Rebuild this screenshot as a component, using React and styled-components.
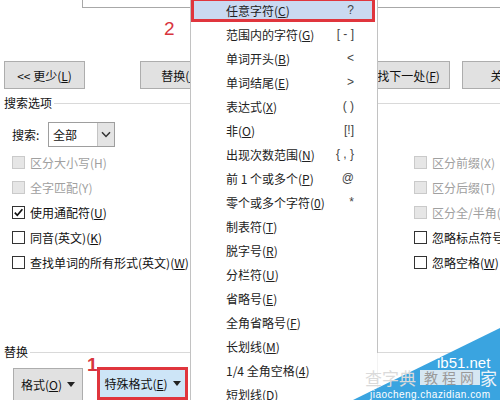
import React from "react";
import styled, { createGlobalStyle } from "styled-components";

const GlobalStyle = createGlobalStyle`
  html, body {
    margin: 0;
    padding: 0;
    background: #fff;
  }
  body {
    width: 500px;
    height: 400px;
    overflow: hidden;
    font-family: "Noto Sans CJK SC", "Liberation Sans", sans-serif;
    font-size: 12px;
    color: #1a1a1a;
  }
`;

const leftOptions = [
  { label: "区分大小写", key: "H", disabled: true },
  { label: "全字匹配", key: "Y", disabled: true },
  { label: "使用通配符", key: "U", checked: true },
  { label: "同音(英文)", key: "K" },
  { label: "查找单词的所有形式(英文)", key: "W" },
];

const rightOptions = [
  { label: "区分前缀", key: "X", disabled: true },
  { label: "区分后缀", key: "T", disabled: true },
  { label: "区分全/半角", key: "M", disabled: true },
  { label: "忽略标点符号", key: "S" },
  { label: "忽略空格", key: "W" },
];

const menuItems = [
  { label: "任意字符", key: "C", hint: "?", selected: true },
  { label: "范围内的字符", key: "G", hint: "[ - ]" },
  { label: "单词开头", key: "B", hint: "<" },
  { label: "单词结尾", key: "E", hint: ">" },
  { label: "表达式", key: "X", hint: "( )" },
  { label: "非", key: "O", hint: "[!]" },
  { label: "出现次数范围", key: "N", hint: "{ , }" },
  { label: "前 1 个或多个", key: "P", hint: "@" },
  { label: "零个或多个字符", key: "0", hint: "*" },
  { label: "制表符", key: "T" },
  { label: "脱字号", key: "R" },
  { label: "分栏符", key: "U" },
  { label: "省略号", key: "E" },
  { label: "全角省略号", key: "F" },
  { label: "长划线", key: "M" },
  { label: "1/4 全角空格", key: "4" },
  { label: "短划线", key: "D" },
];

function Caret() {
  return (
    <svg width="8" height="5" viewBox="0 0 8 5">
      <polygon points="0,0 8,0 4,5" fill="#222" />
    </svg>
  );
}

function CheckOption({ label, shortcut, disabled, checked }) {
  return (
    <Option $disabled={disabled}>
      <Box $disabled={disabled}>
        {checked && (
          <svg width="11" height="11" viewBox="0 0 11 11">
            <path d="M1.8 5.6 L4.3 8.3 L9.4 2.2" fill="none" stroke="#111" strokeWidth="1.7" />
          </svg>
        )}
      </Box>
      <span>
        {label}({disabled ? shortcut : <u>{shortcut}</u>})
      </span>
    </Option>
  );
}

function App() {
  return (
    <Dialog>
      <GlobalStyle />
      <TopField />

      <ButtonRow>
        <Button $w={81} $mr={43}><span>&lt;&lt; 更少(<u>L</u>)</span></Button>
        <Button $w={82}><span>替换(<u>R</u>)</span></Button>
        <Button $w={109}><span>全部替换(<u>A</u>)</span></Button>
        <Button $w={95}><span>查找下一处(<u>F</u>)</span></Button>
        <Button $w={81}><span>关闭</span></Button>
      </ButtonRow>

      <SectionHead $top={7}>
        <span>搜索选项</span>
        <Rule />
      </SectionHead>

      <SearchRow>
        <FieldLabel>搜索:</FieldLabel>
        <Select>
          <SelectText>全部</SelectText>
          <SelectButton>
            <svg width="10" height="7" viewBox="0 0 10 7">
              <path d="M1 1.2 L5 5.4 L9 1.2" fill="none" stroke="#333" strokeWidth="1.5" />
            </svg>
          </SelectButton>
        </Select>
      </SearchRow>

      <OptionGrid>
        {leftOptions.map((o, i) => (
          <CheckOption key={"l" + i} label={o.label} shortcut={o.key} disabled={o.disabled} checked={o.checked} />
        ))}
        {rightOptions.map((o, i) => (
          <CheckOption key={"r" + i} label={o.label} shortcut={o.key} disabled={o.disabled} checked={o.checked} />
        ))}
      </OptionGrid>

      <SectionHead $top={70}>
        <span>替换</span>
        <Rule />
      </SectionHead>

      <BottomRow>
        <DropButton $w={70}>
          <span>格式(<u>O</u>)</span>
          <Caret />
        </DropButton>
        <DropButton $w={91} $active>
          <span>特殊格式(<u>E</u>)</span>
          <Caret />
        </DropButton>
      </BottomRow>

      <Menu>
        {menuItems.map((m, i) => (
          <MenuItem key={i} $selected={m.selected}>
            <span>
              {m.label}(<u>{m.key}</u>)
            </span>
            {m.hint && <Hint>{m.hint}</Hint>}
          </MenuItem>
        ))}
      </Menu>

      <Mark $x={164} $y={18}>2</Mark>
      <Mark $x={87} $y={354} $bold>1</Mark>

      <Watermark>
        <svg width="147" height="72" viewBox="0 0 147 72">
          <rect x="0" y="25" width="147" height="47" fill="#fff" opacity="0.8" />
          <polygon points="0,72 147,0 147,72" fill="#3aa4e0" />
          <text x="84" y="40" fill="#fff" fontSize="15" fontFamily="Liberation Sans, sans-serif">ib51.net</text>
          <text x="12" y="57" fill="#dadada" fontSize="17" fontFamily="Noto Sans CJK SC, sans-serif">查字典</text>
          <rect x="67" y="42" width="60" height="15" fill="#e8eef4" opacity="0.9" />
          <text x="71" y="55" fill="#9a9a9a" fontSize="14" fontFamily="Noto Sans CJK SC, sans-serif" letterSpacing="4">教程网</text>
          <text x="127" y="57" fill="#eef4f8" fontSize="17" fontFamily="Noto Sans CJK SC, sans-serif">家</text>
          <text x="17" y="70" fill="#fff" fontSize="10" fontFamily="Liberation Sans, sans-serif" textLength="120">jiaocheng.chazidian.com</text>
        </svg>
      </Watermark>
    </Dialog>
  );
}

export default App;

const Dialog = styled.div`
  position: relative;
  width: 500px;
  height: 400px;
  overflow: hidden;
  background: #fff;
`;

const TopField = styled.div`
  margin-left: 82px;
  height: 7px;
  border: 1px solid #a8a8a8;
  border-top: none;
  border-right: none;
`;

const ButtonRow = styled.div`
  display: flex;
  gap: 12px;
  margin-top: 53px;
  padding-left: 4px;
  height: 28px;
`;

const Button = styled.div`
  flex-shrink: 0;
  box-sizing: border-box;
  width: ${(p) => p.$w}px;
  margin-right: ${(p) => p.$mr || 0}px;
  height: 28px;
  display: flex;
  align-items: center;
  justify-content: center;
  background: #e1e1e1;
  border: 1px solid #adadad;
  color: #111;
  white-space: nowrap;
`;

const SectionHead = styled.div`
  display: flex;
  align-items: center;
  gap: 2px;
  margin-top: ${(p) => p.$top}px;
  padding-left: 4px;
  height: 14px;
  line-height: 14px;
  color: #111;
`;

const Rule = styled.div`
  flex: 1;
  height: 1px;
  background: #d9d9d9;
`;

const SearchRow = styled.div`
  display: flex;
  align-items: center;
  margin-top: 12px;
  padding-left: 12px;
  height: 24px;
`;

const FieldLabel = styled.span`
  width: 36px;
  color: #111;
`;

const Select = styled.div`
  box-sizing: border-box;
  display: flex;
  width: 67px;
  height: 25px;
  border: 1px solid #9e9e9e;
  background: #fff;
`;

const SelectText = styled.div`
  flex: 1;
  display: flex;
  align-items: center;
  padding-left: 4px;
  color: #111;
`;

const SelectButton = styled.div`
  width: 16px;
  display: flex;
  align-items: center;
  justify-content: center;
  background: #e4e4e4;
  border-left: 1px solid #c4c4c4;
`;

const OptionGrid = styled.div`
  display: grid;
  grid-template-columns: 402px 1fr;
  grid-template-rows: repeat(5, 25px);
  grid-auto-flow: column;
  margin-top: 4px;
  padding-left: 12px;
`;

const Option = styled.div`
  display: flex;
  align-items: center;
  gap: 5px;
  white-space: nowrap;
  color: ${(p) => (p.$disabled ? "#a0a0a0" : "#111")};
`;

const Box = styled.div`
  box-sizing: border-box;
  width: 13px;
  height: 13px;
  display: flex;
  align-items: center;
  justify-content: center;
  border: 1px solid ${(p) => (p.$disabled ? "#cacaca" : "#333")};
  background: ${(p) => (p.$disabled ? "#e6e6e6" : "#fff")};
`;

const BottomRow = styled.div`
  display: flex;
  gap: 14px;
  margin-top: 9px;
  padding-left: 13px;
`;

const DropButton = styled.div`
  box-sizing: border-box;
  width: ${(p) => p.$w}px;
  height: 33px;
  display: flex;
  align-items: center;
  justify-content: center;
  gap: 5px;
  margin-top: ${(p) => (p.$active ? "-1px" : "0")};
  background: ${(p) => (p.$active ? "#cde5f7" : "#e1e1e1")};
  border: ${(p) => (p.$active ? "3px solid #e0353d" : "1px solid #adadad")};
  color: #111;
  white-space: nowrap;
`;

const Menu = styled.div`
  position: absolute;
  left: 190px;
  top: -2px;
  width: 188px;
  box-sizing: border-box;
  background: #fff;
  border-left: 1px solid #c2c2c2;
  border-right: 1px solid #c2c2c2;
  color: #222;
`;

const MenuItem = styled.div`
  box-sizing: border-box;
  height: 24px;
  display: flex;
  align-items: center;
  justify-content: space-between;
  white-space: nowrap;
  padding: 0 ${(p) => (p.$selected ? 18 : 23)}px 0 ${(p) => (p.$selected ? 32 : 35)}px;
  margin-right: ${(p) => (p.$selected ? 2 : 0)}px;
  background: ${(p) => (p.$selected ? "#cad9f1" : "transparent")};
  border: ${(p) => (p.$selected ? "3px solid #e0353d" : "none")};
`;

const Hint = styled.span`
  font-family: "Liberation Sans", sans-serif;
  color: #444;
  white-space: pre;
`;

const Mark = styled.div`
  position: absolute;
  left: ${(p) => p.$x}px;
  top: ${(p) => p.$y}px;
  font-family: "Liberation Sans", sans-serif;
  font-size: 19px;
  font-weight: ${(p) => (p.$bold ? 700 : 400)};
  color: #d8353d;
`;

const Watermark = styled.div`
  position: absolute;
  right: 0;
  bottom: 0;
  width: 147px;
  height: 72px;
  line-height: 0;
`;
